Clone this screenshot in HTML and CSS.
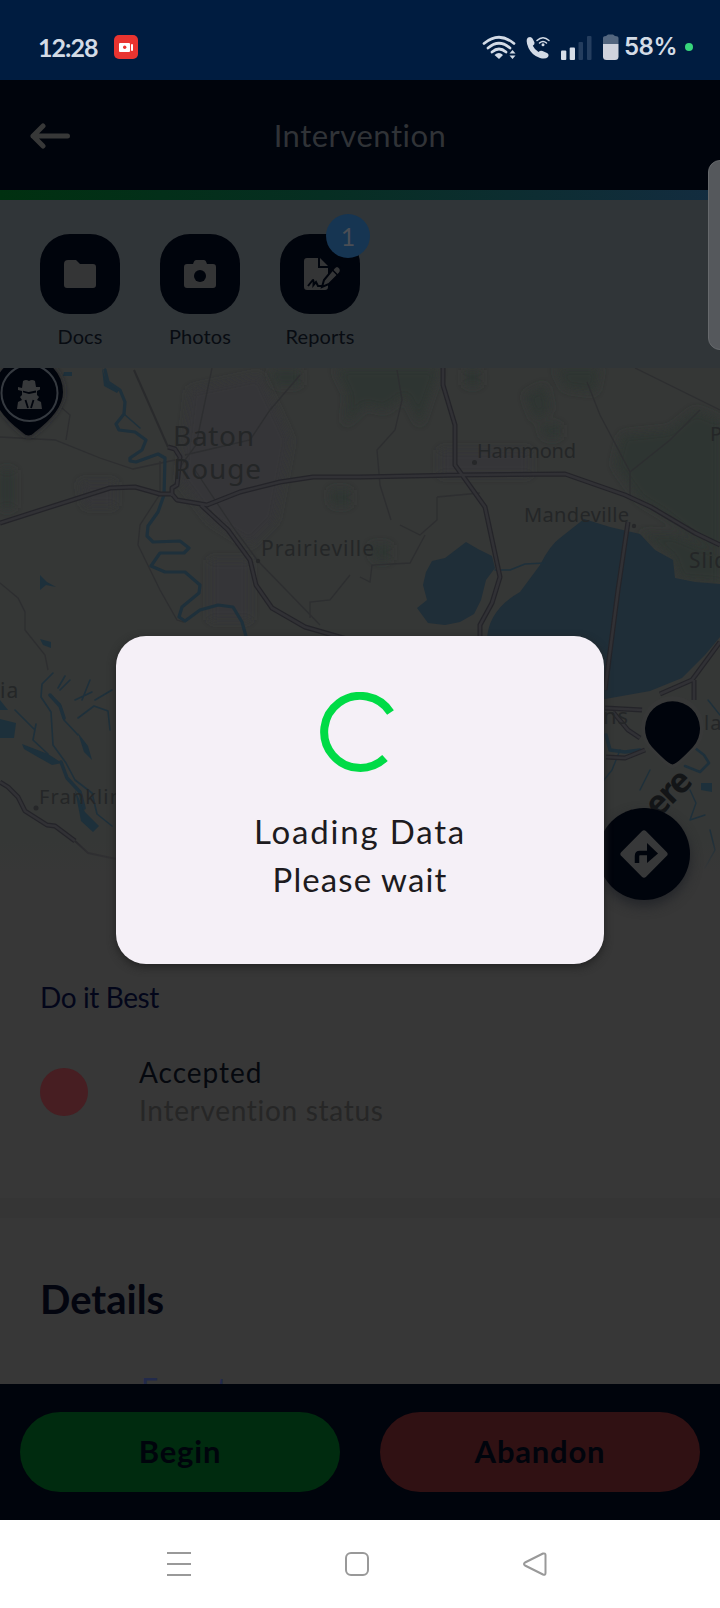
FILE: index.html
```html
<!DOCTYPE html>
<html lang="en">
<head>
<meta charset="utf-8">
<title>Intervention</title>
<link rel="stylesheet" href="styles.css">
</head>
<body>
<div class="phone">
  <div class="status-bar">
    <span class="clock">12:28</span>
    <svg class="rec" width="24" height="24" viewBox="0 0 24 24"><rect width="24" height="24" rx="5" fill="#e93430"/><rect x="5" y="8" width="11" height="9" rx="1" fill="#fff"/><rect x="17" y="9" width="2" height="7" rx="1" fill="#fff"/><circle cx="10.700" cy="12.300" r="1.700" fill="#e93430"/></svg>
    <svg class="signals" width="138" height="28" viewBox="482 32 138 28">
      <g fill="none" stroke="#d3dbe6" stroke-width="2.700" stroke-linecap="round">
        <path d="M484 42.500Q499 30 514 42.500M488 47Q499 37.500 510 47M492 51Q499 45 506 51"/>
      </g>
      <path d="M494.500 54Q499 50 503 54L499 58ZM509.500 52.500L512.500 49L515.500 52.500ZM509.500 54.500L512.500 58L515.500 54.500Z" fill="#d3dbe6"/>
      <path d="M528 36.500Q531 35 532.500 37.500L534.500 41.500Q535 43.500 532.800 44.800Q534.500 48.500 538.500 51Q540.500 49 542.500 50L547 52Q549.500 53.500 548 56Q545.500 58.500 540 57Q532 54.500 528.500 47Q525 39 528 36.500Z" fill="#d3dbe6"/>
      <path d="M537 39.500Q543 34 549 39.500M539.500 42Q543 39 546.500 42" fill="none" stroke="#d3dbe6" stroke-width="1.500" stroke-linecap="round"/><circle cx="543" cy="43.700" r="1.500" fill="#d3dbe6"/>
      <rect x="561" y="49.500" width="5.300" height="9.500" rx="1" fill="#d7dde7"/><rect x="569.700" y="46.500" width="5.300" height="12.500" rx="1" fill="#d7dde7"/>
      <rect x="578.500" y="41" width="4.500" height="18" rx="1" fill="#243d5e"/><rect x="587" y="35" width="4.500" height="24" rx="1" fill="#243d5e"/>
      <path d="M603 43V37Q603 35 606 35L608 33.500H613L615 35Q618.500 35 618.500 37V43Z" fill="#53667f"/><path d="M603 43H618.500V55.500Q618.500 59 615 59H606.500Q603 59 603 55.500Z" fill="#cfd3dd"/>
    </svg>
    <span class="battery">58%</span>
    <i class="privacy-dot"></i>
  </div>

  <div class="header">
    <svg width="40" height="26" viewBox="0 0 40 26"><path d="M13 3L3 13L13 23M3 13H37.500" fill="none" stroke="#373838" stroke-width="5" stroke-linecap="round" stroke-linejoin="round"/></svg>
    <h1 class="title">Intervention</h1>
  </div>
  <div class="accent"></div>

  <div class="tools">
    <div class="tool">
      <div class="tile"><svg width="32" height="28" viewBox="0 0 32 28"><path d="M4 0H12L16 4H29Q32 4 32 7V25Q32 28 29 28H3Q0 28 0 25V4Q0 0 4 0Z" fill="#343536"/></svg></div>
      <span>Docs</span>
    </div>
    <div class="tool">
      <div class="tile"><svg width="32" height="28" viewBox="0 0 32 28"><path d="M9 4L10 1.500Q10.700 0 12 0H20Q21.500 0 22 1.500L23 4H29Q32 4 32 7V25Q32 28 29 28H3Q0 28 0 25V7Q0 4 3 4Z" fill="#343536"/><circle cx="16" cy="16" r="6" fill="#00040c"/></svg></div>
      <span>Photos</span>
    </div>
    <div class="tool">
      <div class="tile tile-report"><svg width="37" height="33" viewBox="0 0 37 33"><path d="M3 0H14V10H24V29Q24 32 21 32H3Q0 32 0 29V3Q0 0 3 0ZM16 0L24 8H16Z" fill="#343536"/><path d="M4 28L8 23Q10 20 9.500 27L12 24L14 28H18" fill="none" stroke="#00040c" stroke-width="2"/><path d="M18 29L20 22L30 10Q33 6 36 10Q38 13 35 16L25 26Z" fill="#343536" stroke="#00040c" stroke-width="2"/><path d="M28.500 12L33.500 17" stroke="#00040c" stroke-width="1.500"/></svg>
        <span class="badge">1</span></div>
      <span>Reports</span>
    </div>
  </div>

  <div class="map">
    <svg class="map-art" width="720" height="504" viewBox="0 368 720 504">
      <defs><filter id="soft" x="-20%" y="-20%" width="140%" height="140%"><feGaussianBlur stdDeviation="5"/></filter><filter id="shade" x="-30%" y="-30%" width="160%" height="160%"><feGaussianBlur stdDeviation="3"/></filter>
      <linearGradient id="fade" x1="0" y1="0" x2="0" y2="1"><stop offset="0" stop-color="#373737" stop-opacity="0"/><stop offset="1" stop-color="#373737"/></linearGradient></defs>
      <rect y="368" width="720" height="504" fill="#353736"/>
      <g fill="#2f3630" filter="url(#soft)">
        <path d="M335 368H440L430 395L420 425L405 395L385 410L365 405L345 425L348 395Z"/>
        <path d="M525 395L545 385L550 410L535 420ZM555 368H600L595 392L565 388ZM540 425H560V437H545ZM465 370H480V385H465ZM270 370H300V385H275Z"/>
        <path d="M670 430L695 410L720 420V555L690 535L665 515L640 500L615 465L622 435Z"/>
        <path d="M640 533L675 535L720 555V583L680 580L672 558ZM330 490H350V505H332ZM370 545H390V560H375ZM0 470H14V508H0Z"/>
      </g>
      <g fill="#343437" filter="url(#soft)"><path d="M190 390L260 375L290 440L275 520L250 545L210 520L180 480ZM80 482H115V506H85ZM440 450H530V475H440ZM210 560H250V620H210Z"/></g>
      <g fill="none" stroke="#2d2e30" stroke-width="1.300">
        <path d="M0 437L55 440L100 458L133 469L175 460M212 368L196 445L180 467M300 375L270 410L250 440L185 455M160 461V494L140 525L138 545L160 590L177 620L184 622M195 470L235 530L258 561L320 625M0 583L18 598L25 612V630L45 655L48 670M397 370L402 400L395 430L377 450L380 485L391 520M437 497V520L420 535L400 525M437 497L480 493M310 618V602L330 600L350 575M587 382L600 415L630 472V500M630 472L670 440L700 410M635 368L720 410M62 408L70 415L66 440M360 577L370 582L372 565L410 563L425 535"/>
        <path stroke="#292a2c" stroke-width="2" d="M134 370L168 447"/>
      </g>
      <g fill="#1f2e38">
        <path d="M466 542L478 549L492 556L495 568L486 580L481 600L474 614L460 622L445 625L428 623L417 608L427 600L423 585L426 572L432 561L445 558Z"/>
        <path d="M584 519L610 527L640 534L655 550L673 560L675 578L695 582L720 584V637L705 655L682 678L650 691L605 699L500 700L487 640Q488 610 520 592L540 565Q550 545 560 538Z"/>
      </g>
      <g fill="#1d303b">
        <path d="M102 368L106 380L120 389L117 393L104 386ZM40 575L47 582L56 587L46 585L40 590ZM40 639L51 642V648L43 645ZM0 719L16 723L14 738H0ZM0 700L8 710H0Z"/>
        <path d="M22 744L35 749L48 754L62 763L52 765L36 756L24 749ZM78 733L88 746L92 760L84 752ZM75 790L85 812L99 826L93 832L81 821ZM701 783L712 783V792L701 790ZM64 372H72V376H63Z"/>
      </g>
      <g fill="none" stroke="#1e303b" stroke-linecap="round" stroke-linejoin="round">
        <path stroke-width="3.200" d="M105 370L108 382L120 390L125 402L124 414L116 424L119 430L135 432L146 440L142 450L130 458V461L136 462L158 454L165 458L164 495L158 512L148 526L147 536L153 542L180 541L189 548L184 553L160 553L151 566L165 572L185 572L200 585L199 593L182 607L179 617L185 621L200 610L218 605L233 607L242 622L247 640"/>
        <path stroke-width="1.600" d="M124 414L140 428M53 673L42 684L41 697L51 712L53 745L66 763L75 780L92 793L97 814L112 826M50 695L60 704L64 720L78 735M60 690L70 680M75 700L92 692M78 718L94 706L108 711L110 730M58 688L65 676M95 700L112 690M82 700L90 680M36 724L33 740L48 754M15 710L35 730"/>
        <path stroke-width="3.500" d="M61 762L67 778L80 792L84 808M50 695L60 706L64 718M606 735L610 750L625 752L640 750"/>
        <path stroke-width="2.500" d="M685 766L700 772L709 763L704 755L695 748"/>
        <path stroke-width="1.400" d="M495 570L510 570L525 564L545 563M620 750L612 770L600 785M690 790L696 803L690 820L705 815M710 830L715 850L705 868M708 700L720 715M650 770L640 790"/>
      </g>
      <g fill="none" stroke-linejoin="round">
        <path stroke="#242429" stroke-width="5" d="M0 523L110 488L135 487L160 494H172L177 500L207 505L240 492L280 482L313 477L360 477L460 475L565 474L625 495L651 507L695 533L720 545M201 505L228 530L250 560L256 585L272 608L305 627L350 640M168 447L175 449L180 457L177 485L172 488V496M443 368V385L455 425V465L485 507L500 577L492 603L480 625V645M628 522L618 590L605 690M660 694L692 680L720 642M694 680V700M605 708L642 710M613 712L628 730L640 738M606 757L625 758L645 750M0 782L8 787L18 797L25 811L47 825L55 826L75 841"/>
        <path stroke="#313135" stroke-width="2.600" d="M0 523L110 488L135 487L160 494H172L177 500L207 505L240 492L280 482L313 477L360 477L460 475L565 474L625 495L651 507L695 533L720 545M201 505L228 530L250 560L256 585L272 608L305 627L350 640M168 447L175 449L180 457L177 485L172 488V496M443 368V385L455 425V465L485 507L500 577L492 603L480 625V645M628 522L618 590L605 690M660 694L692 680L720 642M694 680V700M605 708L642 710M613 712L628 730L640 738M606 757L625 758L645 750M0 782L8 787L18 797L25 811L47 825L55 826L75 841"/>
        <path d="M75 841L88 853L116 859" stroke="#28282c" stroke-width="2"/>
      </g>
      <g class="places">
        <text x="173" y="445.500" font-size="28" textLength="82">Baton</text>
        <text x="173" y="479" font-size="28" textLength="89">Rouge</text>
        <text x="261" y="556" font-size="21" textLength="114">Prairieville</text>
        <text x="477" y="458" font-size="20" textLength="100">Hammond</text>
        <text x="524" y="521.500" font-size="20" textLength="106">Mandeville</text>
        <text x="689" y="568" font-size="21">Slidell</text><text x="710" y="441" font-size="20">Pearl</text>
        <text x="0" y="698" font-size="21">ia</text><text x="39" y="804" font-size="20" textLength="84">Franklin</text>
        <text x="603" y="724" font-size="22">ns</text><text x="704" y="730" font-size="20">la</text>
      </g>
      <g fill="#262729"><circle cx="474.500" cy="462.500" r="2.500"/><circle cx="258" cy="561" r="2.200"/><circle cx="634" cy="526" r="2.200"/><circle cx="36" cy="808" r="2.500"/></g>
      <text class="brand" transform="translate(644 833) rotate(-45)" x="0" y="0">here</text>
      <rect y="840" width="720" height="32" fill="url(#fade)"/>
      <path d="M28.500 437Q-4 412 -5 392A33.700 33.700 0 0 1 63 392Q63 412 28.500 437Z" fill="#202225" filter="url(#shade)"/>
      <path d="M28.500 435.500Q25.500 435.500 22 432Q-6 411 -6 392A34.500 34.500 0 0 1 63 392Q63 411 35 432Q31.500 435.500 28.500 435.500Z" fill="#00040c"/>
      <circle cx="29.500" cy="393" r="28" fill="none" stroke="#353a40" stroke-width="2"/>
      <path d="M22 388L23 381Q26 379 29 381Q32 379 35 381L36 387H40V389.500L37 391V395L39 397L37 400L41 402L42 409H17L18 402L22 400L20 397L22 395V391L18 390V387Z" fill="#37393b"/>
      <path d="M23 391.500L29 393L36 391.500M25.500 400L28 408M33.500 400L31 408" stroke="#00040c" stroke-width="1.800" fill="none"/>
      <path d="M672.500 766Q669 766 651 747A29 29 0 1 1 694 747Q676 766 672.500 766Z" fill="#373838" stroke="#373838" stroke-width="5"/>
      <path d="M672.500 764.500Q668 764 652 747A27.500 27.500 0 1 1 693 747Q677 764 672.500 764.500Z" fill="#00040c"/>
    </svg>
    <div class="fab"><svg width="52" height="52" viewBox="0 0 52 52"><rect x="8.500" y="8.500" width="35" height="35" rx="3" transform="rotate(45 26 26)" fill="#373839"/><path d="M19 35V28Q19 25 22 25H31" fill="none" stroke="#00040c" stroke-width="4.500"/><path d="M29 15L40 25.500L29 35Z" fill="#00040c"/></svg></div>
  </div>

  <div class="content">
    <p class="place-name">Do it Best</p>
    <div class="status-row">
      <i class="dot"></i>
      <div class="status-text"><span class="accepted">Accepted</span><span class="hint">Intervention status</span></div>
    </div>
    <div class="divider"></div>
    <h2 class="details">Details</h2>
    <p class="expert">Expert</p>
  </div>

  <div class="actions">
    <div class="btn begin">Begin</div>
    <div class="btn abandon">Abandon</div>
  </div>

  <div class="nav">
    <svg width="24" height="24" viewBox="0 0 24 24"><path d="M0 1H24M0 12H24M0 23H24"/></svg>
    <svg width="24" height="24" viewBox="0 0 24 24"><rect x="1" y="1" width="22" height="22" rx="5"/></svg>
    <svg width="24" height="24" viewBox="0 0 24 24"><path d="M2 10.500L20 1.500Q22.500 1 22.500 3V21Q22.500 23.500 20 22.500L2 13.500Q0 12 2 10.500Z"/></svg>
  </div>

  <div class="edge-handle"></div>
  <div class="dialog">
    <svg width="80" height="80" viewBox="0 0 80 80"><path d="M70.500 20.500A36 36 0 1 0 65 66" fill="none" stroke="#00db46" stroke-width="8"/></svg>
    <p class="loading">Loading Data</p>
    <p class="wait">Please wait</p>
  </div>
</div>
</body>
</html>
```
FILE: styles.css
```css
* { box-sizing: border-box; }
body, p, h1, h2 { margin: 0; font-weight: 400; }
body { font-family: Lato, "Liberation Sans", sans-serif; background: #373737; }
svg { display: block; flex: none; }
.phone { position: relative; width: 720px; height: 1608px; overflow: hidden; display: flex; flex-direction: column; background: #373737; }
.phone > div { flex: none; }

.status-bar { height: 80px; background: #001c40; display: flex; align-items: center; padding: 14px 27px 0 38px; color: #d3dbe6; }
.clock { font: 700 25px/30px Lato, sans-serif; width: 76px; letter-spacing: -1px; padding-bottom: 1px; }
.signals { margin-left: auto; }
.battery { font: 600 24px/30px Inter, sans-serif; width: 65px; padding-left: 4px; letter-spacing: -.5px; }
.privacy-dot { width: 8px; height: 8px; border-radius: 50%; background: #37d67c; }

.header { height: 110px; background: #00040c; display: grid; grid-template-columns: 40px 1fr 40px; align-items: center; padding: 2px 30px 0; }
.title { font-size: 31px; font-weight: 400; text-align: center; color: #303337; letter-spacing: .5px; padding-bottom: 3px; }
.accent { height: 10px; background: linear-gradient(90deg, #003010, #062e22 45%, #132c40); }

.tools { height: 168px; background: #303538; display: flex; gap: 40px; padding: 34px 40px 0; }
.tool { width: 80px; display: flex; flex-direction: column; align-items: center; gap: 8px; font-size: 20px; line-height: 28px; color: #080c12; letter-spacing: .1px; white-space: nowrap; }
.tile { position: relative; width: 80px; height: 80px; border-radius: 30px; background: #00040c; display: grid; place-items: center; }
.tile-report { padding-left: 5px; }
.badge { position: absolute; left: 46px; top: -20px; width: 44px; height: 44px; border-radius: 50%; background: #163552; color: #4a4e55; font-size: 25px; line-height: 44px; text-align: center; }

.map { position: relative; height: 504px; }
.places { font-family: "Noto Sans", sans-serif; fill: #242627; letter-spacing: 1px; }
.brand { font: 700 34px "Noto Sans", sans-serif; fill: #131517; letter-spacing: -2px; }
.fab { position: absolute; left: 598px; top: 440px; width: 92px; height: 92px; border-radius: 50%; background: #00040c; display: grid; place-items: center; box-shadow: 0 6px 12px #24262a; }

.content { height: 512px; overflow: hidden; color: #05080e; }
.place-name { padding: 107px 40px 0; font-size: 28px; line-height: 36px; color: #03061a; letter-spacing: -.4px; }
.status-row { display: flex; align-items: center; gap: 51px; height: 76px; margin: 39px 40px 0; }
.dot { width: 48px; height: 48px; border-radius: 50%; background: #471e22; }
.status-text { display: flex; flex-direction: column; font-size: 28px; line-height: 38px; padding-bottom: 3px; }
.accepted { letter-spacing: 1px; }
.hint { color: #262626; letter-spacing: .7px; }
.divider { height: 20px; margin-top: 68px; background: #353535; }
.details { padding: 59px 40px 0; font-size: 40px; line-height: 44px; font-weight: 700; color: #03050f; }
.expert { padding: 49px 141px 0; font-size: 30px; line-height: 36px; color: #222a4b; }

.actions { height: 136px; background: #00040c; display: flex; gap: 40px; padding: 28px 20px; }
.btn { flex: 1; height: 80px; border-radius: 40px; font-size: 31px; line-height: 78px; font-weight: 700; text-align: center; color: #00040c; letter-spacing: .8px; }
.begin { background: #002b0f; }
.abandon { background: #301113; }

.nav { height: 88px; background: #fff; display: flex; gap: 154px; padding: 32px 167px; }
.nav svg { fill: none; stroke: #999; stroke-width: 2; stroke-linejoin: round; }

.edge-handle { position: absolute; left: 708px; top: 160px; width: 24px; height: 190px; border-radius: 12px; background: #55585c; border: 1px solid #66696c; }
.dialog { position: absolute; left: 116px; top: 636px; width: 488px; height: 328px; border-radius: 30px; background: #f5f0f7; display: flex; flex-direction: column; align-items: center; padding-top: 56px; color: #1d1b20; font-size: 33px; line-height: 48px; box-shadow: 0 3px 8px #222; }
.loading { margin-top: 35px; letter-spacing: 1.800px; }
.wait { letter-spacing: 1.100px; }
```
